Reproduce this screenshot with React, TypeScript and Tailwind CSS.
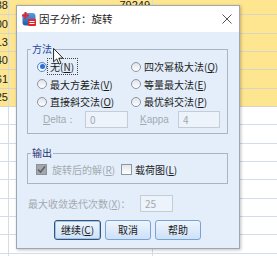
import React from "react";

const colA = ["1.38", "2.00", "0.13", "0.40", "-0.61", "0.25", "", "", "", "", "", "", "", "", ""];

function Sheet() {
  return (
    <div className="-mt-[3px] flex flex-col text-[11px] font-['Liberation_Sans',sans-serif] text-[#222]">
      {colA.map((v, i) => (
        <div
          key={i}
          className={`flex h-[18.33px] shrink-0 border-b ${i < 6 ? "bg-[#fee58f] border-[#d8d6c2]" : "bg-white border-[#d2dde8]"}`}
        >
          <div className="w-[9px] shrink-0 border-r border-[#d2dde8] flex justify-end items-center overflow-hidden">
            <span className="shrink-0 whitespace-nowrap">{v}</span>
          </div>
          <div className="w-[144px] shrink-0 border-r border-[#d2dde8] flex justify-end items-center pr-[2px]">
            {i === 0 ? "79249" : ""}
          </div>
          <div className="flex-1" />
        </div>
      ))}
    </div>
  );
}

function Radio({ checked }: { checked?: boolean }) {
  return (
    <span
      className={`w-[10px] h-[10px] shrink-0 rounded-full border flex items-center justify-center bg-linear-to-b ${checked ? "border-[#5b86c2] from-[#dde9f8] to-[#ffffff]" : "border-[#8d96a3] from-[#dfe3e8] to-[#ffffff]"}`}
    >
      {checked && <span className="w-[5px] h-[5px] rounded-full bg-[#2a6fd8]" />}
    </span>
  );
}

function Opt({ label, k, checked, focus }: { label: string; k: string; checked?: boolean; focus?: boolean }) {
  return (
    <div className="flex items-center h-[17.5px]">
      <Radio checked={checked} />
      <span
        className={`whitespace-nowrap leading-[13px] ${focus ? "ml-0 border border-dotted border-[#444] pl-[2px] pr-[3px] py-[1px]" : "ml-[3px]"}`}
      >
        {label}(<span className="underline">{k}</span>)
      </span>
    </div>
  );
}

function TextBox({ value, w }: { value: string; w: string }) {
  return (
    <div className={`${w} h-[17px] shrink-0 border border-[#c4ccd6] bg-[#edf3fa] flex items-center pl-[4px] text-[#a3a9b0]`}>
      {value}
    </div>
  );
}

function Btn({ children, def }: { children: React.ReactNode; def?: boolean }) {
  return (
    <button
      className={`h-[20px] rounded-[3px] border bg-linear-to-b from-[#eef5fd] to-[#cde1f7] text-[10px] leading-none text-[#1a1a1a] ${def ? "w-[47px] border-[#3a536f] shadow-[inset_0_0_0_1px_#9cc3ec]" : "w-[46px] border-[#78a3d4]"}`}
    >
      {children}
    </button>
  );
}

function SpssIcon() {
  return (
    <svg width="14" height="14" viewBox="0 0 14 14">
      <defs>
        <linearGradient id="ib" x1="0" y1="0" x2="0" y2="1">
          <stop offset="0" stopColor="#5f9be0" />
          <stop offset="1" stopColor="#1d5aa8" />
        </linearGradient>
      </defs>
      <rect x="0.5" y="1" width="13" height="12.5" rx="3" fill="url(#ib)" />
      <rect x="2.5" y="0" width="2" height="7" fill="#e2262b" />
      <rect x="0" y="2.5" width="7" height="2" fill="#e2262b" />
      <rect x="6" y="7" width="8" height="7" rx="1" fill="#e2262b" />
      <rect x="7.5" y="9" width="5" height="1" fill="#fff" />
      <rect x="7.5" y="11" width="5" height="1" fill="#fff" />
    </svg>
  );
}

function Cursor() {
  return (
    <svg className="absolute left-[53px] top-[48px]" width="11" height="17" viewBox="0 0 12 19">
      <path d="M0.5 0.5 L0.5 15.5 L4 12.2 L6.6 18 L8.8 17 L6.3 11.4 L11 11.4 Z" fill="#fff" stroke="#111" strokeWidth="1" strokeLinejoin="round" />
    </svg>
  );
}

export default function App() {
  return (
    <div className="relative w-[277px] h-[256px] overflow-hidden bg-white">
      <Sheet />

      <div className="absolute left-[16px] top-[5px] w-[224px] h-[244px] border border-[#9ea6b0] bg-[#e3eefa] shadow-[1px_1px_3px_rgba(0,0,0,0.25)] flex flex-col text-[10px] text-[#1b1b1b] font-['Noto_Sans_CJK_SC',sans-serif]">
        <div className="h-[26px] shrink-0 bg-white flex items-center pl-[5px] pr-[7px]">
          <SpssIcon />
          <span className="ml-[3px] text-[10.5px] leading-none">因子分析：旋转</span>
          <svg className="ml-auto" width="10" height="10" viewBox="0 0 10 10">
            <path d="M0.5 0.5 L9.5 9.5 M9.5 0.5 L0.5 9.5" stroke="#555" strokeWidth="1" />
          </svg>
        </div>

        <div className="flex flex-col pt-[11px]">
          <fieldset className="ml-[10px] w-[201px] border border-[#aab5c3] pt-[3px] pb-[5px]">
            <legend className="ml-[3px] px-[1px] text-[10px] leading-[12px] text-[#2546a0]">方法</legend>
            <div className="grid grid-cols-[94px_1fr] pl-[9px]">
              <Opt label="无" k="N" checked focus />
              <Opt label="四次幂极大法" k="Q" />
              <Opt label="最大方差法" k="V" />
              <Opt label="等量最大法" k="E" />
              <Opt label="直接斜交法" k="O" />
              <Opt label="最优斜交法" k="P" />
              <div className="flex items-center h-[17.5px] pl-[6px] text-[#a3a9b0]">
                <span className="w-[42px] font-['Liberation_Sans',sans-serif]">
                  <span className="underline">D</span>elta：
                </span>
                <TextBox value="0" w="w-[43px]" />
              </div>
              <div className="flex items-center h-[17.5px] pl-[9px] text-[#a3a9b0]">
                <span className="w-[38px] font-['Liberation_Sans',sans-serif]">
                  <span className="underline">K</span>appa
                </span>
                <TextBox value="4" w="w-[42px]" />
              </div>
            </div>
          </fieldset>

          <fieldset className="mt-[13px] ml-[10px] w-[201px] border border-[#aab5c3] pt-[2px] pb-[5px]">
            <legend className="ml-[3px] px-[1px] text-[10px] leading-[12px] text-[#1f3470]">输出</legend>
            <div className="flex items-center h-[17px] pl-[8px]">
              <div className="w-[85px] flex items-center">
                <span className="w-[11px] h-[11px] shrink-0 bg-[#a4a7ab] border border-[#8e9196] flex items-center justify-center">
                  <svg width="9" height="9" viewBox="0 0 9 9">
                    <path d="M1 4.5 L3.5 7 L8 1.5" fill="none" stroke="#5e6166" strokeWidth="1.6" />
                  </svg>
                </span>
                <span className="ml-[5px] whitespace-nowrap text-[#a3a9b0]">
                  旋转后的解(<span className="underline">R</span>)
                </span>
              </div>
              <span className="w-[11px] h-[11px] shrink-0 border border-[#8d96a3] bg-linear-to-b from-[#e2e5e9] to-white" />
              <span className="ml-[3px] whitespace-nowrap">
                载荷图(<span className="underline">L</span>)
              </span>
            </div>
          </fieldset>

          <div className="mt-[11px] ml-[11px] flex items-center h-[17px]">
            <span className="w-[112px] whitespace-nowrap text-[#a3a9b0]">
              最大收敛迭代次数(<span className="underline">X</span>)：
            </span>
            <TextBox value="25" w="w-[33px]" />
          </div>

          <div className="mt-[8px] flex justify-center gap-[4px] pr-[1px]">
            <Btn def>
              继续(<span className="underline">C</span>)
            </Btn>
            <Btn>取消</Btn>
            <Btn>帮助</Btn>
          </div>
        </div>
      </div>

      <Cursor />
    </div>
  );
}
